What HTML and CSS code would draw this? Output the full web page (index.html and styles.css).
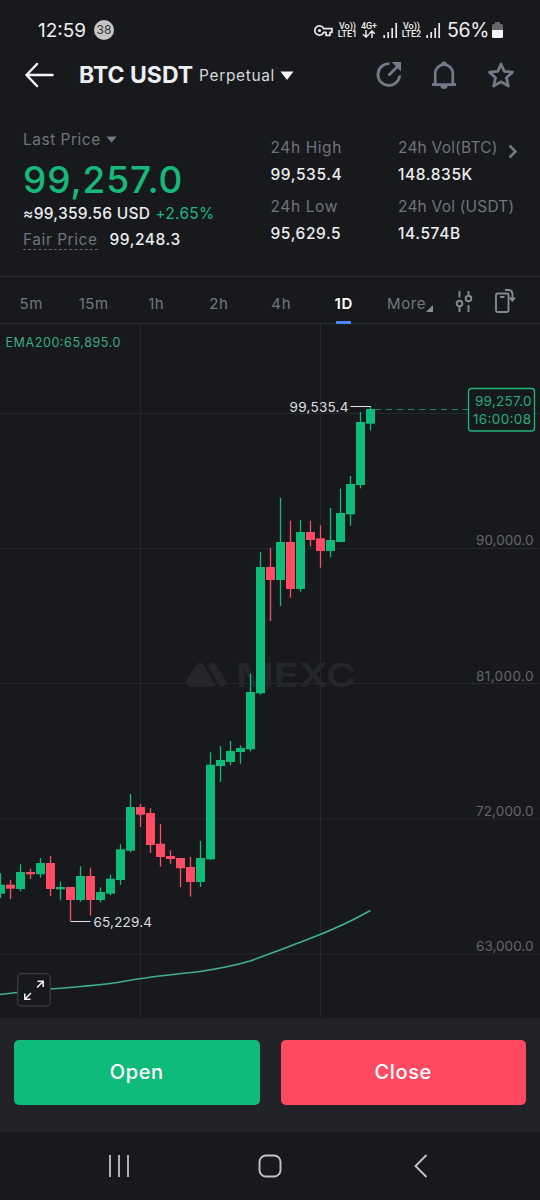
FILE: index.html
```html
<!DOCTYPE html>
<html lang="en">
<head>
<meta charset="utf-8">
<title>BTC USDT Perpetual</title>
<link rel="stylesheet" href="styles.css">
</head>
<body>
<div class="screen">
  <div class="status">
    <span class="clock">12:59</span>
    <span class="count">38</span>
    <svg class="key" width="19" height="13" viewBox="0 0 19 13"><path d="M9.6 4.7A4.6 4.6 0 1 0 9.6 8.3H12V11.3H16V8.3H18V4.7Z" fill="none" stroke="#e8e8e8" stroke-width="1.7" stroke-linejoin="round"/><circle cx="5.5" cy="6.5" r="1.6" fill="#e8e8e8"/></svg>
    <span class="net lte1"><span>Vo))</span><span>LTE1</span></span>
    <span class="net data"><span>4G+</span><svg width="14" height="8" viewBox="0 0 14 8"><path d="M4 0V7M1 4.2L4 7L7 4.2M10 8V1M7.200 3.800L10 1L12.800 3.800" fill="none" stroke="#e8e8e8" stroke-width="1.5"/></svg></span>
    <svg class="bars1" width="15" height="15" viewBox="0 0 15 15"><path d="M1.200 12V15M5.200 9V15M9.200 5V15M13.200 0V15" stroke="#e8e8e8" stroke-width="1.7"/></svg>
    <span class="net lte2"><span>Vo))</span><span>LTE2</span></span>
    <svg class="bars2" width="15" height="15" viewBox="0 0 15 15"><path d="M1.200 12V15M5.200 9V15M9.200 5V15M13.200 0V15" stroke="#e8e8e8" stroke-width="1.7"/></svg>
    <span class="percent">56%</span>
    <svg class="battery" width="11" height="16" viewBox="0 0 11 16"><path d="M3 0H8V2H9.500Q11 2 11 3.500V8H0V3.500Q0 2 1.500 2H3Z" fill="#66676a"/><path d="M0 8H11V14.500Q11 16 9.500 16H1.500Q0 16 0 14.500Z" fill="#f4f4f4"/></svg>
  </div>

  <header class="header">
    <svg class="back" width="30" height="26" viewBox="0 0 30 26"><path d="M28.500 13H2.500M13 2L2.500 13L13 24" fill="none" stroke="#f4f5f6" stroke-width="2.500" stroke-linecap="round" stroke-linejoin="round"/></svg>
    <h1 class="pair">BTC USDT</h1>
    <span class="kind">Perpetual</span>
    <svg class="kind-caret" width="14" height="9" viewBox="0 0 14 9"><path d="M.5.5H13.500L7 9Z" fill="#f4f5f6"/></svg>
    <svg class="share" width="28" height="28" viewBox="0 0 28 28"><g fill="none" stroke="#727987" stroke-width="2.800"><path d="M14.500 2.700A10.900 10.900 0 1 0 24.700 14.500"/><path d="M13.500 14.500L23 5"/></g><path d="M16.500 1H26V10.500Z" fill="#727987"/></svg>
    <svg class="bell" width="26" height="30" viewBox="0 0 26 30"><path d="M4.200 24V13.500A8.800 8.800 0 0 1 21.800 13.500V24M1 24.700H25" fill="none" stroke="#727987" stroke-width="2.700"/><path d="M10 4.500A3 3 0 0 1 16 4.500ZM9.500 26H16.500A3.500 3 0 0 1 9.500 26Z" fill="#727987"/></svg>
    <svg class="star" width="28" height="28" viewBox="0 0 28 28"><path d="M14 3L17.200 10.300L25.500 11.200L19.400 16.700L21.400 25L14 20.700L6.600 25L8.600 16.700L2.500 11.200L10.800 10.300Z" fill="none" stroke="#727987" stroke-width="2.800" stroke-linejoin="round"/></svg>
  </header>

  <section class="summary">
    <div class="price">
      <div class="label last">Last Price <svg width="11" height="7" viewBox="0 0 11 7"><path d="M.3.500H10.700L5.500 6.500Z" fill="#727987"/></svg></div>
      <div class="big">99,257.0</div>
      <div class="usd"><span class="approx">≈99,359.56 USD</span><span class="up">+2.65%</span></div>
      <div class="fair"><span class="label dashed">Fair Price</span><span class="value">99,248.3</span></div>
    </div>
    <div class="stats">
      <div class="label">24h High</div>
      <div class="value">99,535.4</div>
      <div class="label">24h Low</div>
      <div class="value">95,629.5</div>
    </div>
    <div class="stats">
      <div class="label narrow">24h Vol(BTC)<svg class="more-stats" width="10" height="15" viewBox="0 0 10 15"><path d="M1.500 1.500L7.500 7.500L1.500 13.500" fill="none" stroke="#727987" stroke-width="2.500"/></svg></div>
      <div class="value">148.835K</div>
      <div class="label narrow">24h Vol (USDT)</div>
      <div class="value">14.574B</div>
    </div>
  </section>

  <nav class="tabs">
    <span class="tab">5m</span>
    <span class="tab">15m</span>
    <span class="tab">1h</span>
    <span class="tab">2h</span>
    <span class="tab">4h</span>
    <span class="tab active">1D</span>
    <span class="more">More<svg width="7" height="7" viewBox="0 0 7 7"><path d="M7 0V7H0Z" fill="#8a8d94"/></svg></span>
    <svg class="tune" width="18" height="23" viewBox="0 0 18 23"><g fill="none" stroke="#858993" stroke-width="1.900"><path d="M4.500 1V7.500M4.500 16.500V22M13.500 1V5.500M13.500 15V22"/><circle cx="4.500" cy="13.500" r="2.800"/><circle cx="13.500" cy="8.500" r="2.800"/></g></svg>
    <svg class="rotate" width="22" height="26" viewBox="0 0 22 26"><g fill="none" stroke="#858993" stroke-width="1.900"><rect x="2" y="5.500" width="12.500" height="18.500" rx="1.500"/><path d="M6 9H10.500M11 2H14Q18.500 2 18.500 6.500V12M15.700 9.500L18.500 12.500L21 9.500"/></g></svg>
  </nav>

  <main class="chart">
    <svg width="540" height="694" viewBox="0 324 540 694">
      <g class="watermark">
        <path d="M188 686Q185 685 187 680L196 665Q199 661 203 664L215 684V687H190Z"/>
        <path d="M208 666Q212 660 216 665L226 681Q227 687 220 687L208 667Z"/>
        <text x="236" y="687" textLength="120" lengthAdjust="spacingAndGlyphs">MEXC</text>
      </g>
      <path class="grid" d="M0 413.500H540M0 548.500H540M0 683.500H540M0 819H540M0 954H540M140.500 323V1018M320.500 323V1018"/>
      <g id="candles"></g>
      <path class="ema" d="M0 994.500L17 992.500L50 989C75 987 95 985.500 110 983.500S130 979.500 145 978C165 975 185 973.500 200 971.500C220 968.500 235 965.500 250 961C260 957.500 270 953.500 280 950L310 938.500C335 929 350 922 370.500 910.500"/>
      <path class="leader" d="M350.500 406.500H370.500M70.500 921.500H90.500"/>
      <path class="current" d="M375 409.500H468"/>
      <text class="ema-label" x="5.500" y="347" textLength="115">EMA200:65,895.0</text>
      <text class="mark" x="289.500" y="411.500" textLength="59">99,535.4</text>
      <text class="mark" x="93.500" y="927" textLength="58.500">65,229.4</text>
      <g class="axis">
        <text x="476" y="545" textLength="57.500">90,000.0</text>
        <text x="476" y="680.500" textLength="57.500">81,000.0</text>
        <text x="476" y="815.500" textLength="57.500">72,000.0</text>
        <text x="476" y="950.500" textLength="57.500">63,000.0</text>
      </g>
      <rect class="tag" x="468.500" y="388.500" width="66" height="42.500" rx="3"/>
      <text class="tag-text" x="475" y="406" textLength="56.500">99,257.0</text>
      <text class="tag-text" x="473" y="424" textLength="58">16:00:08</text>
      <rect class="expand" x="17.700" y="973.700" width="32.500" height="32.500" rx="4"/>
      <path class="expand-icon" d="M37 987.500L43 981.500M37.500 981.300H43.200V987M31 993L25 999M30.500 999.200H24.800V993.500"/>
    </svg>
  </main>

  <footer class="actions">
    <button class="btn open">Open</button>
    <button class="btn close">Close</button>
  </footer>

  <div class="system-nav">
    <svg width="22" height="24" viewBox="0 0 22 24"><path d="M2 1V23M11 1V23M20 1V23" stroke="#c2c3c6" stroke-width="1.800"/></svg>
    <svg class="home" width="24" height="24" viewBox="0 0 24 24"><rect x="1.500" y="1.500" width="21" height="21" rx="6.500" fill="none" stroke="#c2c3c6" stroke-width="1.900"/></svg>
    <svg class="nav-back" width="14" height="24" viewBox="0 0 14 24"><path d="M12.500 1L1.500 12L12.500 23" fill="none" stroke="#c2c3c6" stroke-width="1.900"/></svg>
  </div>
</div>
<script src="chart.js"></script>
</body>
</html>
```
FILE: styles.css
```css
* { box-sizing: border-box; }
body {
  margin: 0;
  background: #18191d;
  color: #eceef1;
  font-family: Inter, Roboto, sans-serif;
  font-size: 16px;
}
svg { display: block; flex: none; }
.screen {
  width: 540px;
  height: 1200px;
  overflow: hidden;
  display: flex;
  flex-direction: column;
  white-space: nowrap;
}

.status {
  height: 50px;
  padding: 10px 36px 0 38px;
  display: flex;
  align-items: center;
  color: #efefef;
}
.clock { width: 56px; flex: none; font-size: 19px; }
.count {
  width: 20px;
  height: 20px;
  flex: none;
  border-radius: 50%;
  background: #c6c6c6;
  color: #333;
  font-size: 12px;
  line-height: 20px;
  text-align: center;
}
.key { margin-left: 200px; }
.net {
  height: 17px;
  flex: none;
  display: flex;
  flex-direction: column;
  align-items: center;
  font: 500 9px/8.5px Roboto, sans-serif;
}
.lte1 { width: 21px; margin-left: 4px; }
.data { width: 18px; margin-left: 2px; }
.bars1 { margin-left: 5px; }
.lte2 { width: 21px; margin-left: 3px; }
.bars2 { margin-left: 4px; }
.percent { margin-left: 6px; width: 43px; flex: none; font-size: 19.500px; letter-spacing: -0.3px; }
.battery { margin-left: 2px; }

.header {
  height: 50px;
  padding-left: 24px;
  display: flex;
  align-items: center;
}
.pair { margin: 0 0 0 25px; width: 120px; font-size: 23px; font-weight: 700; }
.kind { width: 81px; font-size: 15.500px; letter-spacing: .65px; color: #d5d7da; }
.share { margin-left: 81px; }
.bell { margin-left: 28px; }
.star { margin-left: 30px; }

.summary {
  height: 177px;
  border-bottom: 1px solid #2c2d32;
  display: grid;
  grid-template-columns: 247.500px 127.500px 1fr;
  padding: 29px 0 0 23px;
}
.label { color: #70747d; }
.last { display: flex; align-items: center; gap: 5px; height: 20px; font-size: 15.500px; letter-spacing: .5px; }
.big { height: 51px; line-height: 62px; font-size: 37px; font-weight: 450; letter-spacing: .9px; color: #16b979; }
.usd { display: flex; gap: 5px; height: 27px; line-height: 27px; font-size: 15.500px; letter-spacing: .3px; }
.approx { font-weight: 450; }
.up { color: #20b77d; }
.fair { display: flex; gap: 12px; line-height: 20px; padding-top: 3px; font-size: 15.500px; letter-spacing: .55px; }
.dashed { height: 20px; border-bottom: 1px dashed #60636a; }
.value { font-weight: 450; }
.stats { padding-top: 6px; line-height: 26px; font-size: 15.500px; letter-spacing: .6px; }
.stats .value { line-height: 27px; }
.stats .label { display: flex; align-items: center; gap: 10px; }
.stats .label:nth-child(3) { margin-top: 6px; }
.stats .narrow { letter-spacing: .2px; }
.more-stats { margin-top: 7px; }

.tabs {
  height: 47px;
  border-bottom: 1px solid #2c2d32;
  display: flex;
  align-items: center;
  font-size: 15px;
  letter-spacing: .6px;
  color: #727781;
  padding-top: 7px;
}
.tab { width: 62.500px; text-align: center; }
.tab.active {
  position: relative;
  color: #fff;
  font-weight: 600;
}
.tab.active::after {
  content: "";
  position: absolute;
  left: 23.500px;
  bottom: -11px;
  width: 15px;
  height: 3px;
  background: #4b86ed;
}
.more { margin-left: 12px; width: 68px; display: flex; align-items: flex-end; }
.more svg { margin-bottom: 1px; }
.tune { margin-bottom: 4px; }
.rotate { margin: 0 0 5px 21px; }

.chart { height: 694px; }
.watermark { fill: #25262b; font-size: 33px; font-weight: 600; }
.grid { stroke: #26272c; fill: none; }
.up-wick { stroke: #0fbb78; stroke-width: 1.300; }
.down-wick { stroke: #ff4b64; stroke-width: 1.300; }
.up-body { fill: #0fbb78; }
.down-body { fill: #ff4b64; }
.ema { fill: none; stroke: #3fb286; stroke-width: 1.500; }
.ema-label { fill: #3dab80; font-size: 12.500px; }
.leader { stroke: #e2e3e5; }
.mark { fill: #dedfe1; font-size: 13.500px; }
.axis { fill: #65666a; font-size: 13.500px; }
.current { stroke: #20875f; stroke-dasharray: 6 5; }
.tag { fill: #18191d; stroke: #20b77d; stroke-width: 1.300; }
.tag-text { fill: #26ad7a; font-size: 13.500px; }
.expand { fill: #18191d; stroke: #3a3b40; stroke-width: 1.300; }
.expand-icon { fill: none; stroke: #f3f3f3; stroke-width: 1.500; }

.actions {
  height: 114px;
  background: #222328;
  padding: 22px 14px 0;
  display: grid;
  grid-template-columns: 1fr 1fr;
  gap: 21px;
}
.btn {
  height: 64.500px;
  border: 0;
  border-radius: 5px;
  color: #fff;
  font: 500 20px Inter, sans-serif;
  letter-spacing: .6px;
}
.open { background: #0fbb78; }
.close { background: #ff4961; }
.system-nav {
  height: 68px;
  padding-left: 108px;
  display: flex;
  align-items: center;
}
.home { margin-left: 128px; }
.nav-back { margin-left: 132px; }
```
FILE: chart.js
```js
// Each candle: rising flag, wick top, body top, body bottom, wick bottom.
const candles = [
  [1, 873.3, 884.7, 893.7, 898], [0, 880, 884.7, 888.7, 899], [1, 864.3, 872, 889, 891.3],
  [0, 868.7, 872, 874.3, 879], [1, 858, 863, 874.3, 877.7], [0, 856, 863, 889, 896],
  [1, 881.7, 887, 889.3, 900.3], [0, 887, 887, 900, 921], [1, 866.3, 876, 900, 901.7],
  [0, 867.7, 876, 900, 915.7], [1, 887.3, 892, 900, 902.3], [1, 874.7, 878.7, 893.7, 895.3],
  [1, 844.3, 849.3, 880, 885], [1, 794, 807, 850.7, 852.3], [0, 804, 807, 814.7, 827],
  [0, 808.3, 813, 845, 853], [0, 824, 843.7, 857, 866.7], [0, 850.3, 856, 859, 863.7],
  [0, 858, 858, 868.3, 887], [0, 856.7, 867, 882, 896.7], [1, 841, 858, 882, 887],
  [1, 752.3, 764.7, 859.3, 860], [1, 746, 760, 766, 782], [1, 741, 751, 762, 765.3],
  [1, 745.3, 748, 752, 763.7], [1, 673.7, 692, 749.3, 751.3], [1, 552, 567, 693.3, 694.7],
  [0, 548, 567, 580, 621], [1, 497.7, 542, 580, 606], [0, 520.7, 542, 589, 597.7],
  [1, 520, 532, 589, 591.7], [0, 520.7, 532, 540, 546.3], [0, 525.3, 538.3, 551, 567.7],
  [1, 508, 540, 551, 557.3], [1, 488.7, 513, 542, 542.3], [1, 476, 484, 514.3, 525.7],
  [1, 412, 422, 485, 488.3], [1, 406, 409, 423.7, 430.3]
];
document.getElementById("candles").innerHTML = candles.map(([rising, high, top, bottom, low], i) => {
  const x = i * 10 + 0.5;
  const kind = rising ? "up" : "down";
  return `<path class="${kind}-wick" d="M${x} ${high}V${low}"/>` +
    `<rect class="${kind}-body" x="${x - 4.5}" y="${top}" width="9" height="${bottom - top}"/>`;
}).join("");
```
